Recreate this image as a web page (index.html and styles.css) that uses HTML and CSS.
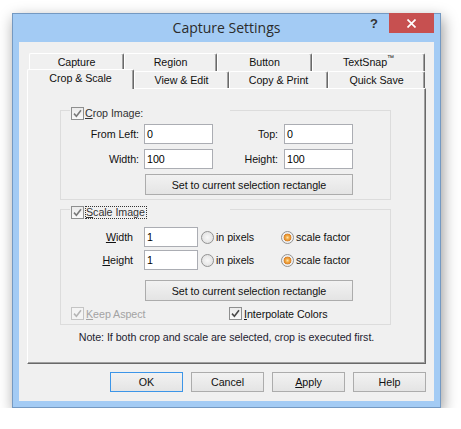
FILE: index.html
```html
<!DOCTYPE html>
<html>
<head>
<meta charset="utf-8">
<link rel="stylesheet" href="styles.css">
</head>
<body>
<div class="window">
  <div class="titlebar">
    <div></div>
    <div class="title">Capture Settings</div>
    <div class="controls">
      <span class="help">?</span>
      <span class="close"><svg width="9" height="9" viewBox="0 0 9 9"><path d="M0.5 0.5L8.5 8.5M8.5 0.5L0.5 8.5" stroke="#fff" stroke-width="1.7" fill="none"/></svg></span>
    </div>
  </div>
  <div class="client">
    <div class="tabrow back">
      <div class="tab t1">Capture</div>
      <div class="tab t2">Region</div>
      <div class="tab t3">Button</div>
      <div class="tab t4">TextSnap<sup class="tm">™</sup></div>
    </div>
    <div class="tabrow front">
      <div class="tab selected">Crop &amp; Scale</div>
      <div class="tab f2">View &amp; Edit</div>
      <div class="tab f3">Copy &amp; Print</div>
      <div class="tab f4">Quick Save</div>
    </div>
    <div class="panel">
      <div class="group crop">
        <div class="legend">
          <span class="cb"><svg width="9" height="9" viewBox="0 0 9 9"><path d="M1 4.6L3.4 7.2L8 1.3" fill="none" stroke="#7a7a7a" stroke-width="1.6"/></svg></span>
          <span class="lbl"><u>C</u>rop Image:</span>
        </div>
        <div class="cgrid">
          <span class="l1">From Left:</span><span class="input">0</span><span class="l2">Top:</span><span class="input">0</span>
          <span class="l1">Width:</span><span class="input">100</span><span class="l2">Height:</span><span class="input">100</span>
          <span class="btn cbtn">Set to current selection rectangle</span>
        </div>
      </div>
      <div class="group scale">
        <div class="legend">
          <span class="cb"><svg width="9" height="9" viewBox="0 0 9 9"><path d="M1 4.6L3.4 7.2L8 1.3" fill="none" stroke="#7a7a7a" stroke-width="1.6"/></svg></span>
          <span class="lbl focus"><u>S</u>cale Image</span>
        </div>
        <div class="srow first">
          <span class="slabel"><u>W</u>idth</span>
          <span class="input sinput">1</span>
          <span class="opt opt1"><span class="radio"></span>in pixels</span>
          <span class="opt"><span class="radio on"></span>scale factor</span>
        </div>
        <div class="srow second">
          <span class="slabel"><u>H</u>eight</span>
          <span class="input sinput">1</span>
          <span class="opt opt1"><span class="radio"></span>in pixels</span>
          <span class="opt"><span class="radio on"></span>scale factor</span>
        </div>
        <div class="btn sbtn">Set to current selection rectangle</div>
        <div class="checks">
          <span class="opt keep disabled"><span class="cb dis"><svg width="9" height="9" viewBox="0 0 9 9"><path d="M1 4.6L3.4 7.2L8 1.3" fill="none" stroke="#b5b5b5" stroke-width="1.6"/></svg></span><span><u>K</u>eep Aspect</span></span>
          <span class="opt"><span class="cb"><svg width="9" height="9" viewBox="0 0 9 9"><path d="M1 4.6L3.4 7.2L8 1.3" fill="none" stroke="#4a4a4a" stroke-width="1.6"/></svg></span><span><u>I</u>nterpolate Colors</span></span>
        </div>
      </div>
      <div class="note">Note: If both crop and scale are selected, crop is executed first.</div>
    </div>
    <div class="buttons">
      <span class="btn dbtn default">OK</span>
      <span class="btn dbtn">Cancel</span>
      <span class="btn dbtn"><span><u>A</u>pply</span></span>
      <span class="btn dbtn">Help</span>
    </div>
  </div>
</div>
</body>
</html>
```
FILE: styles.css
```css
body {
  margin: 0;
  background: #ffffff;
  font-family: "Liberation Sans", Arial, sans-serif;
  font-size: 10.7px;
  letter-spacing: -0.05px;
  color: #111;
}

.window {
  box-sizing: border-box;
  width: 429px;
  height: 395px;
  margin: 13px 0 0 12px;
  border: 1px solid #7499c2;
  background: #a3cbf4;
  padding: 0 6px 6px;
  box-shadow: 2px 5px 14px rgba(0, 0, 0, 0.4);
  display: flex;
  flex-direction: column;
}

.titlebar {
  height: 28px;
  display: grid;
  grid-template-columns: 1fr auto 1fr;
  align-items: start;
}

.title {
  font-family: "Open Sans", "Noto Sans", sans-serif;
  font-size: 14px;
  letter-spacing: 0;
  line-height: 28px;
  color: #2b2b2b;
}

.controls {
  justify-self: end;
  display: flex;
  align-items: flex-start;
}

.help {
  font-family: "Liberation Sans", Arial, sans-serif;
  font-weight: bold;
  font-size: 13px;
  line-height: 16px;
  color: #333;
  margin-top: 2px;
  margin-right: 11px;
}

.close {
  width: 45px;
  height: 20px;
  margin-top: -1px;
  background: #c75050;
  display: flex;
  align-items: center;
  justify-content: center;
}

.client {
  flex: 1;
  background: #f0f0f0;
  padding: 11px 8px 9px;
  display: flex;
  flex-direction: column;
}

.tabrow {
  display: flex;
  padding: 0 2px;
}

.back {
  height: 18px;
}

.front {
  height: 17px;
  align-items: flex-end;
}

.tab {
  box-sizing: border-box;
  flex: none;
  height: 18px;
  border: 1px solid;
  border-color: #ffffff #696969 transparent #ffffff;
  border-bottom: none;
  border-radius: 2px 2px 0 0;
  box-shadow: inset -1px 0 0 #a0a0a0;
  background: #f0f0f0;
  text-align: center;
  line-height: 16px;
  color: #111;
}

.front .tab {
  height: 17px;
  line-height: 16px;
}

.t1 { width: 95px; }
.t2 { width: 93px; }
.t3 { width: 95px; }
.t4 { width: 113px; }
.f2 { width: 95px; }
.f3 { width: 99px; }
.f4 { width: 97px; }

.tm {
  font-size: 7px;
  vertical-align: top;
  line-height: 8px;
}

.front .tab.selected {
  width: 107px;
  height: 20px;
  margin-left: -2px;
  margin-bottom: -1px;
  line-height: 16px;
  position: relative;
  z-index: 2;
}

.panel {
  box-sizing: border-box;
  height: 276px;
  border: 1px solid;
  border-color: #ffffff #696969 #696969 #ffffff;
  box-shadow: inset -1px -1px 0 #a0a0a0;
  padding-top: 21px;
}

.group {
  box-sizing: border-box;
  width: 331px;
  margin-left: 32px;
  border: 1px solid #dcdcdc;
  padding-bottom: 4px;
}

.scale {
  margin-top: 9px;
}

.legend {
  margin: -4px 0 0 9px;
  width: 160px;
  height: 13px;
  background: #f0f0f0;
  display: flex;
  align-items: center;
  gap: 1px;
  padding-left: 1px;
  box-sizing: border-box;
}

.lbl {
  color: #333;
  line-height: 11px;
}

.focus {
  border: 1px dotted #333;
  padding: 0 1px 0 0;
}

.cb {
  box-sizing: border-box;
  width: 13px;
  height: 13px;
  flex: none;
  border: 1px solid #8e8f8f;
  background: linear-gradient(#ebebeb, #fafafa);
  display: inline-flex;
  align-items: center;
  justify-content: center;
}

.cb.dis {
  border-color: #c4c4c4;
  background: #f4f4f4;
}

.cgrid {
  display: grid;
  grid-template-columns: 83px 69px 71px 69px;
  grid-template-rows: 20px 20px 21px;
  row-gap: 5px;
  margin-top: 4px;
  align-items: center;
}

.l1 {
  text-align: right;
  padding-right: 5px;
}

.l2 {
  text-align: right;
  padding-right: 6px;
}

.input {
  box-sizing: border-box;
  height: 20px;
  border: 1px solid #abadb3;
  background: #ffffff;
  padding-left: 2px;
  line-height: 18px;
  color: #000;
}

.btn {
  box-sizing: border-box;
  border: 1px solid #acacac;
  background: linear-gradient(#f2f2f2, #e4e4e4);
  display: flex;
  align-items: center;
  justify-content: center;
  color: #111;
}

.cbtn {
  grid-column: 2 / 5;
  height: 21px;
  margin-left: 1px;
}

.srow {
  display: flex;
  align-items: center;
  height: 20px;
}

.srow.first {
  margin-top: 8px;
}

.srow.second {
  margin-top: 3px;
}

.slabel {
  width: 72px;
  text-align: right;
  margin-right: 11px;
}

.sinput {
  width: 54px;
  margin-right: 3px;
}

.opt {
  display: flex;
  align-items: center;
  gap: 2px;
}

.opt1 {
  width: 80px;
}

.radio {
  box-sizing: border-box;
  width: 13px;
  height: 13px;
  border-radius: 50%;
  border: 1px solid #929292;
  background: radial-gradient(circle, #f8f8f8 0, #e2e2e2 6px);
  flex: none;
}

.radio.on {
  background: radial-gradient(circle, #ffe2a8 0, #f0a640 2px, #d9822b 3.6px, #ececec 4.2px, #f6f6f6 6px);
}

.sbtn {
  width: 208px;
  height: 21px;
  margin: 10px 0 0 84px;
}

.checks {
  display: flex;
  align-items: center;
  height: 13px;
  margin-top: 6px;
  padding-left: 10px;
}

.keep {
  width: 158px;
}

.disabled {
  color: #a3a3a3;
}

.note {
  margin-top: 6px;
  line-height: 13px;
  text-align: center;
  color: #1e2330;
}

.buttons {
  display: flex;
  justify-content: flex-end;
  gap: 8px;
  margin-top: 8px;
}

.dbtn {
  width: 73px;
  height: 20px;
}

.dbtn.default {
  border-color: #3c95e8;
}
```
